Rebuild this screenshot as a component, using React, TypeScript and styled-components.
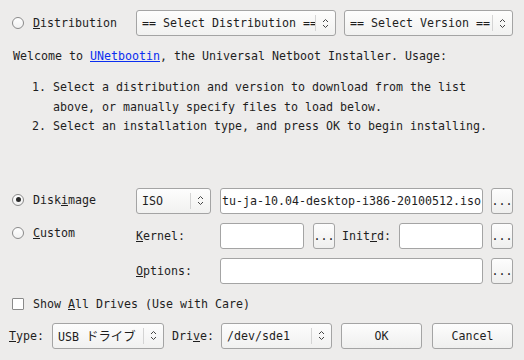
import React from "react";
import styled, { createGlobalStyle } from "styled-components";

const Global = createGlobalStyle`
  html, body { margin: 0; padding: 0; background: #edeceb; }
  body { font-family: "DejaVu Sans Mono", "Noto Sans CJK JP", monospace; }
`;

const FONT = `"DejaVu Sans Mono", "Noto Sans CJK JP", monospace`;

const Window = styled.div`
  width: 524px;
  height: 360px;
  box-sizing: border-box;
  padding: 10px 11px 0 12px;
  background: #edeceb;
  color: #1e1e1e;
  font-family: ${FONT};
  font-size: 11.63px;
  overflow: hidden;
`;

const Row = styled.div<{ $mt?: number; $ml?: number; $h?: number }>`
  display: flex;
  align-items: center;
  height: ${(p) => p.$h ?? 26}px;
  margin-top: ${(p) => p.$mt ?? 0}px;
  margin-left: ${(p) => p.$ml ?? 0}px;
`;

const OptionCell = styled.label<{ $w?: number }>`
  display: flex;
  align-items: center;
  gap: 9px;
  width: ${(p) => p.$w ?? 124}px;
  flex: none;
  height: 16px;
  white-space: nowrap;
`;

const Radio = styled.span<{ $checked?: boolean }>`
  position: relative;
  width: 10px;
  height: 10px;
  border-radius: 50%;
  border: 1px solid #8a8a8a;
  background: linear-gradient(#ffffff, #f1f1f1);
  flex: none;
  &::after {
    content: "";
    display: ${(p) => (p.$checked ? "block" : "none")};
    position: absolute;
    left: 2.5px;
    top: 2.5px;
    width: 5px;
    height: 5px;
    border-radius: 50%;
    background: #2a2a2a;
  }
`;

const Check = styled.span`
  width: 10px;
  height: 10px;
  border: 1px solid #8a8a8a;
  border-radius: 1px;
  background: #ffffff;
  flex: none;
`;

const ComboBox = styled.div<{ $w: number; $ml?: number }>`
  position: relative;
  width: ${(p) => p.$w}px;
  margin-left: ${(p) => p.$ml ?? 0}px;
  height: 26px;
  box-sizing: border-box;
  border: 1px solid #a4a4a4;
  border-radius: 3px;
  background: linear-gradient(#fdfdfd, #f1f1f0);
  display: flex;
  align-items: center;
  flex: none;
`;

const ComboText = styled.span`
  flex: 1;
  padding-left: 5px;
  overflow: hidden;
  white-space: nowrap;
`;

const ComboArrow = styled.span`
  width: 18px;
  height: 16px;
  border-left: 1px solid #d4d4d4;
  display: flex;
  align-items: center;
  justify-content: center;
  flex: none;
  margin-right: 1px;
`;

const Kana = styled.span`
  font-family: "Noto Sans CJK JP", sans-serif;
  font-size: 12.4px;
`;

const Arrows = () => (
  <svg width="7" height="11" viewBox="0 0 7 11">
    <path d="M1 4 L3.5 1.5 L6 4" fill="none" stroke="#444" strokeWidth="1" />
    <path d="M1 7 L3.5 9.5 L6 7" fill="none" stroke="#444" strokeWidth="1" />
  </svg>
);

const Combo = ({ w, ml, children }: { w: number; ml?: number; children: React.ReactNode }) => (
  <ComboBox $w={w} $ml={ml}>
    <ComboText>{children}</ComboText>
    <ComboArrow>
      <Arrows />
    </ComboArrow>
  </ComboBox>
);

const Intro = styled.p`
  margin: 11px 0 0 1px;
  line-height: 19px;
  white-space: nowrap;
`;

const Link = styled.a`
  color: #0a2ef0;
  text-decoration: underline;
`;

const Steps = styled.ol`
  margin: 12px 0 0 0;
  padding: 0;
  list-style: none;
  line-height: 19.5px;
`;

const Step = styled.li`
  display: flex;
  white-space: nowrap;
`;

const StepNum = styled.span`
  width: 41px;
  text-align: right;
  flex: none;
  box-sizing: border-box;
  &::after { content: " "; white-space: pre; }
`;

const Section = styled.div`
  display: flex;
  margin-top: 51px;
`;

const LeftCol = styled.div`
  width: 124px;
  flex: none;
  display: flex;
  flex-direction: column;
  gap: 17px;
  padding-top: 4px;
`;

const RightGrid = styled.div`
  display: flex;
  flex-direction: column;
  gap: 9px;
`;

const Field = styled.div<{ $w: number; $ml?: number }>`
  width: ${(p) => p.$w}px;
  margin-left: ${(p) => p.$ml ?? 0}px;
  height: 26px;
  box-sizing: border-box;
  border: 1px solid #a4a4a4;
  border-radius: 3px;
  background: #ffffff;
  display: flex;
  align-items: center;
  overflow: hidden;
  white-space: nowrap;
  padding-left: 1px;
  flex: none;
`;

const Button = styled.button<{ $w: number; $ml?: number }>`
  width: ${(p) => p.$w}px;
  margin-left: ${(p) => p.$ml ?? 0}px;
  height: 26px;
  box-sizing: border-box;
  border: 1px solid #a4a4a4;
  border-radius: 3px;
  background: linear-gradient(#fdfdfd, #efefee);
  font-family: ${FONT};
  font-size: 11.63px;
  color: #1e1e1e;
  padding: 0;
  display: flex;
  align-items: center;
  justify-content: center;
  flex: none;
`;

const FieldLabel = styled.span<{ $w: number; $ml?: number }>`
  width: ${(p) => p.$w}px;
  margin-left: ${(p) => p.$ml ?? 0}px;
  flex: none;
  white-space: nowrap;
`;

const CheckRow = styled.label`
  display: flex;
  align-items: center;
  gap: 9px;
  height: 16px;
  margin-top: 12px;
  white-space: nowrap;
`;

export default function App() {
  return (
    <>
      <Global />
      <Window>
        <Row>
          <OptionCell>
            <Radio />
            <span>
              <u>D</u>istribution
            </span>
          </OptionCell>
          <Combo w={200}>== Select Distribution ==</Combo>
          <Combo w={169} ml={8}>
            == Select Version ==
          </Combo>
        </Row>

        <Intro>
          Welcome to <Link>UNetbootin</Link>, the Universal Netboot Installer. Usage:
        </Intro>
        <Steps>
          <Step>
            <StepNum>1.</StepNum>
            <span>
              Select a distribution and version to download from the list
              <br />
              above, or manually specify files to load below.
            </span>
          </Step>
          <Step>
            <StepNum>2.</StepNum>
            <span>Select an installation type, and press OK to begin installing.</span>
          </Step>
        </Steps>

        <Section>
          <LeftCol>
            <OptionCell>
              <Radio $checked />
              <span>
                Disk<u>i</u>mage
              </span>
            </OptionCell>
            <OptionCell>
              <Radio />
              <span>
                <u>C</u>ustom
              </span>
            </OptionCell>
          </LeftCol>
          <RightGrid>
            <Row>
              <Combo w={75}>ISO</Combo>
              <Field $w={263} $ml={9}>tu-ja-10.04-desktop-i386-20100512.iso</Field>
              <Button $w={22} $ml={8}>...</Button>
            </Row>
            <Row>
              <FieldLabel $w={84}>
                <u>K</u>ernel:
              </FieldLabel>
              <Field $w={84} />
              <Button $w={22} $ml={9}>...</Button>
              <FieldLabel $w={57} $ml={7}>
                Init<u>r</u>d:
              </FieldLabel>
              <Field $w={84} />
              <Button $w={22} $ml={8}>...</Button>
            </Row>
            <Row>
              <FieldLabel $w={84}>
                <u>O</u>ptions:
              </FieldLabel>
              <Field $w={263} />
              <Button $w={22} $ml={8}>...</Button>
            </Row>
          </RightGrid>
        </Section>

        <CheckRow>
          <Check />
          <span>
            Show <u>A</u>ll Drives (Use with Care)
          </span>
        </CheckRow>

        <Row $mt={11} $ml={-3}>
          <FieldLabel $w={43}>
            <u>T</u>ype:
          </FieldLabel>
          <Combo w={112}>
            USB <Kana>ドライブ</Kana>
          </Combo>
          <FieldLabel $w={49} $ml={8}>
            Dri<u>v</u>e:
          </FieldLabel>
          <Combo w={111}>/dev/sde1</Combo>
          <Button $w={81} $ml={9}>OK</Button>
          <Button $w={81} $ml={10}>Cancel</Button>
        </Row>
      </Window>
    </>
  );
}
